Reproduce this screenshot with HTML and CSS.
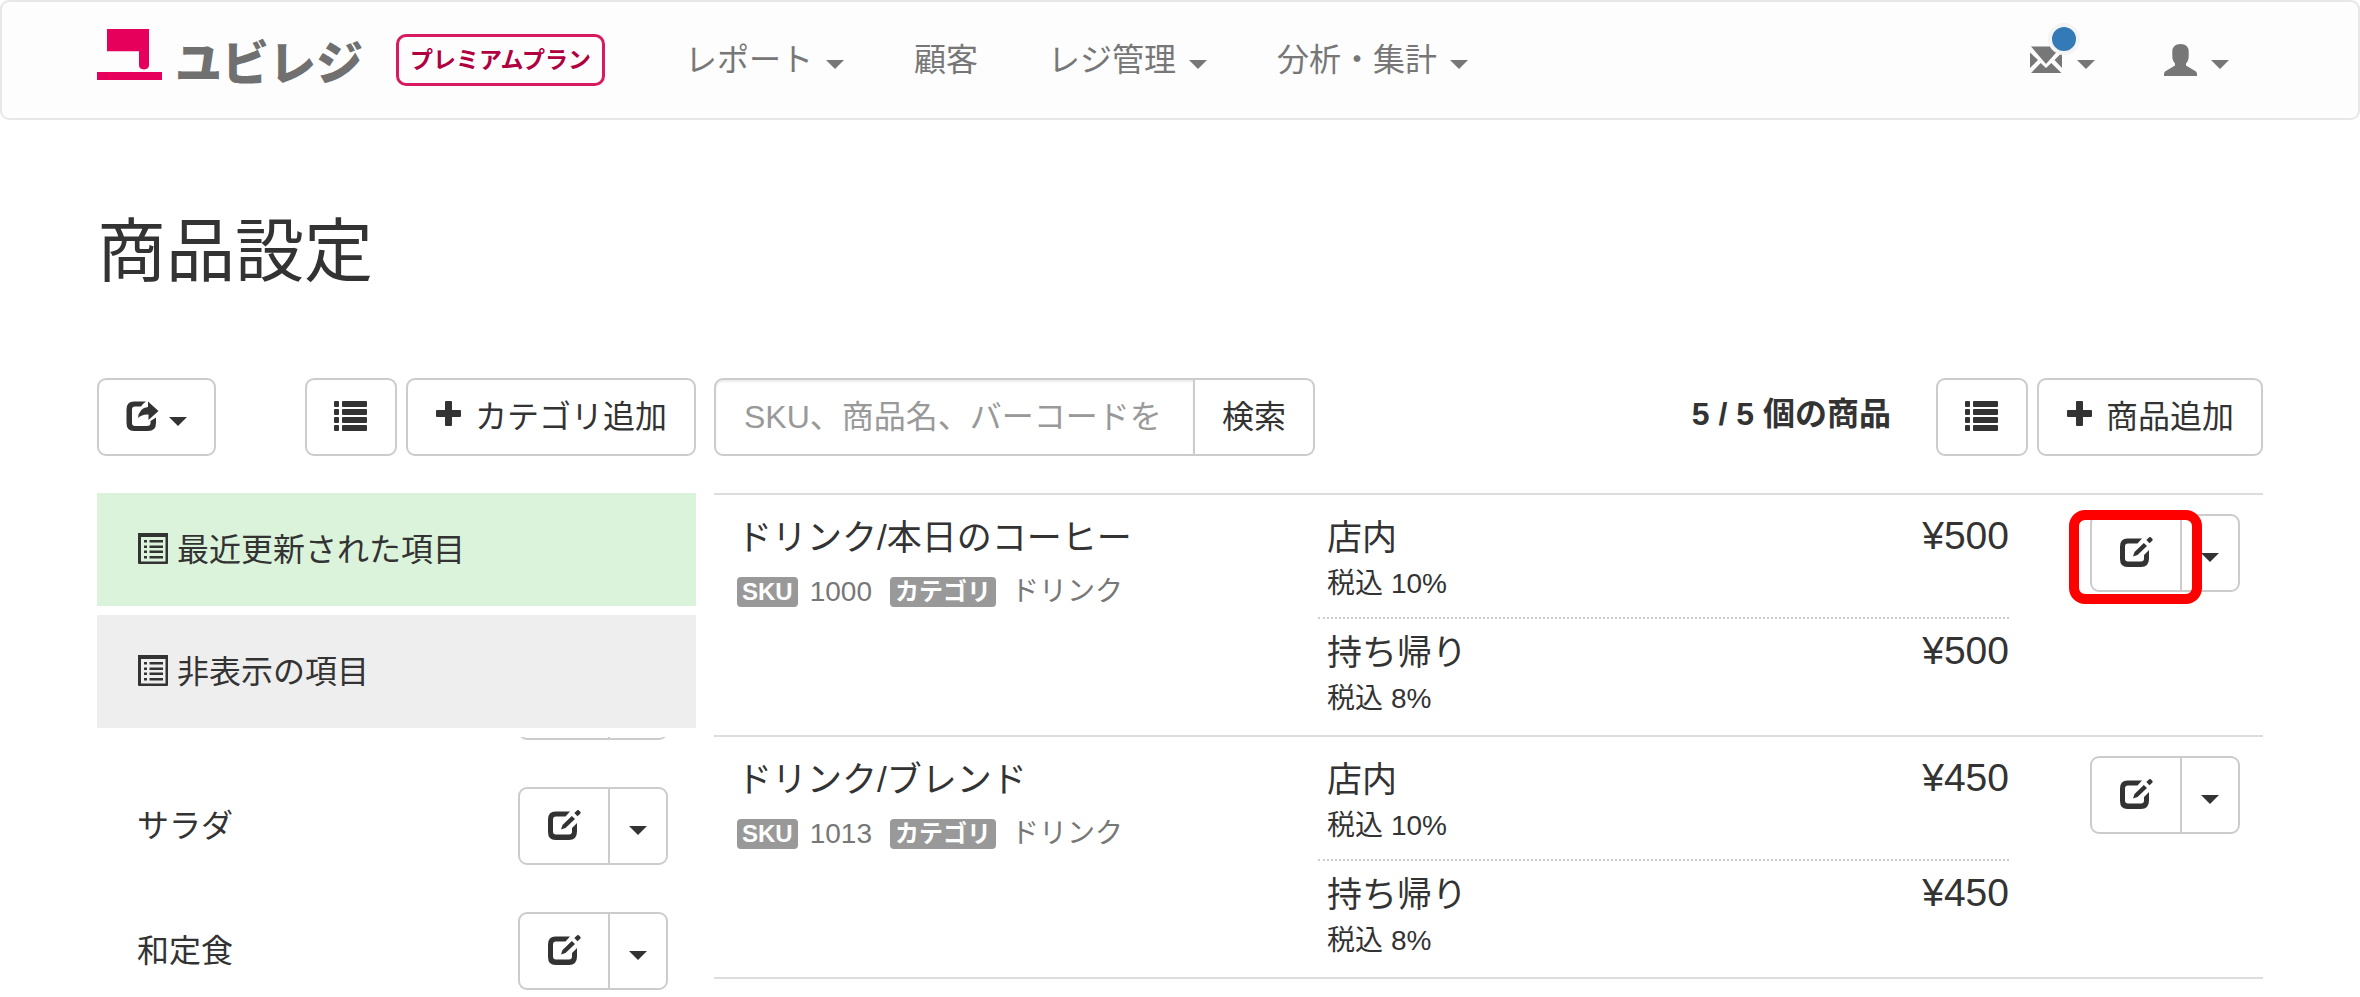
FILE: index.html
```html
<!DOCTYPE html>
<html lang="ja">
<head>
    <meta charset="UTF-8">
    <meta name="viewport" content="width=device-width, initial-scale=1.0">
    <title>商品設定</title>
    <link rel="stylesheet" href="styles.css">
</head>
<body>
<!-- アイコン定義 -->
<svg class="sprite" aria-hidden="true">
    <symbol id="i-share" viewBox="0 0 34 34">
        <path d="M8 1.500H20Q17 3.500 15 6.500H9Q6 6.500 6 9.500V23Q6 26 9 26H21Q24.500 26 24.500 23V21L30 17.500V23Q30 31 22 31H8Q.5 31 .5 23V9.500Q.5 1.500 8 1.500Z"/>
        <path d="M22 1.500L32.500 11L22.500 20V14.500Q16 14 12 18Q13 8 22 7Z"/>
    </symbol>
    <symbol id="i-list" viewBox="0 0 34 34">
        <rect x="0" y="1" width="5" height="6" rx="1"/><rect x="8" y="1" width="25" height="6" rx="1"/>
        <rect x="0" y="9" width="5" height="6" rx="1"/><rect x="8" y="9" width="25" height="6" rx="1"/>
        <rect x="0" y="17" width="5" height="6" rx="1"/><rect x="8" y="17" width="25" height="6" rx="1"/>
        <rect x="0" y="25" width="5" height="6" rx="1"/><rect x="8" y="25" width="25" height="6" rx="1"/>
    </symbol>
    <symbol id="i-plus" viewBox="0 0 34 34">
        <path d="M11 1H16Q17 1 17 2V10H25Q26 10 26 11V16Q26 17 25 17H17V25Q17 26 16 26H11Q10 26 10 25V17H2Q1 17 1 16V11Q1 10 2 10H10V2Q10 1 11 1Z"/>
    </symbol>
    <symbol id="i-edit" viewBox="0 0 34 34">
        <path d="M8.500 2.500H23L18.500 7.500H9Q6 7.500 6 10.500V22.500Q6 25.500 9 25.500H22Q25 25.500 25 22.500V19L30 14V22.500Q30 31 22 31H8.500Q1 31 1 23V10.500Q1 2.500 8.500 2.500Z"/>
        <path d="M14 20.500L15.500 16L24.800 7L28 10L18.500 19Z"/>
        <path d="M27.300 4L30.200 1.200Q31 .8 31.800 1.300L33.500 3Q34 4 33.200 4.800L30.500 7.300Z"/>
    </symbol>
    <symbol id="i-list-alt" viewBox="0 1 34 34">
        <path fill-rule="evenodd" d="M2 0H30Q31 0 31 1V31Q31 32 30 32H2Q1 32 1 31V1Q1 0 2 0ZM4 5V29.500H28.500V5Z"/>
        <path d="M7 8h3v2.500h-3zM12.500 8H26v2.500H12.500zM7 13.500h3V16h-3zM12.500 13.500H26V16H12.500zM7 18.500h3V21h-3zM12.500 18.500H26V21H12.500zM7 24h3v2.500h-3zM12.500 24H26v2.500H12.500z"/>
    </symbol>
    <symbol id="i-mail" viewBox="0 0 34 34">
        <path d="M1 3.500H31.500L16 21ZM0 9.500L8 17L0 25ZM32 9.500L24.500 17L32 25ZM1 30L10.700 20L16 25L21.300 20L31.500 30Z"/>
    </symbol>
    <symbol id="i-user" viewBox="0 0 34 34">
        <path d="M16.500 1Q24.700 1 24.700 9V13Q24.700 18 22 20.500V22.500L32 28.500Q33 29.500 33 31V33H0V31Q0 29.500 1 28.500L11 22.500V20.500Q8.300 18 8.300 13V9Q8.300 1 16.500 1Z"/>
    </symbol>
</svg>

<header class="navbar">
    <a href="#" class="brand">
        <svg class="brand-mark" viewBox="0 0 65 51" aria-hidden="true">
            <path d="M10 0H52V42Q52 47 47 47Q42 47 42 42V26H10Z" transform="scale(1 .86)"/>
            <path d="M0 43H65V51H0Z"/>
        </svg>
        <span class="brand-name">ユビレジ</span>
    </a>
    <span class="plan">プレミアムプラン</span>
    <nav class="menu">
        <a href="#">レポート<span class="caret"></span></a>
        <a href="#">顧客</a>
        <a href="#">レジ管理<span class="caret"></span></a>
        <a href="#">分析・集計<span class="caret"></span></a>
    </nav>
    <nav class="menu menu-right">
        <a href="#" aria-label="お知らせ">
            <span class="mail"><svg class="icon"><use href="#i-mail"/></svg><span class="dot"></span></span>
            <span class="caret"></span>
        </a>
        <a href="#" aria-label="アカウント"><svg class="icon"><use href="#i-user"/></svg><span class="caret"></span></a>
    </nav>
</header>

<main class="container">
    <h1 class="title">商品設定</h1>
    <div class="columns">
        <aside class="side">
            <div class="toolbar">
                <button type="button" class="btn btn-export" aria-label="エクスポート"><svg class="icon"><use href="#i-share"/></svg><span class="caret"></span></button>
                <button type="button" class="btn" aria-label="カテゴリ並び替え"><svg class="icon"><use href="#i-list"/></svg></button>
                <button type="button" class="btn"><svg class="icon"><use href="#i-plus"/></svg>カテゴリ追加</button>
            </div>
            <a href="#" class="filter active"><svg class="icon"><use href="#i-list-alt"/></svg>最近更新された項目</a>
            <a href="#" class="filter"><svg class="icon"><use href="#i-list-alt"/></svg>非表示の項目</a>
            <ul class="categories">
                <li>
                    <span></span>
                    <div class="btn-group">
                        <button type="button" class="btn" aria-label="編集"><svg class="icon"><use href="#i-edit"/></svg></button>
                        <button type="button" class="btn btn-caret" aria-label="メニュー"><span class="caret"></span></button>
                    </div>
                </li>
                <li>
                    <span>サラダ</span>
                    <div class="btn-group">
                        <button type="button" class="btn" aria-label="編集"><svg class="icon"><use href="#i-edit"/></svg></button>
                        <button type="button" class="btn btn-caret" aria-label="メニュー"><span class="caret"></span></button>
                    </div>
                </li>
                <li>
                    <span>和定食</span>
                    <div class="btn-group">
                        <button type="button" class="btn" aria-label="編集"><svg class="icon"><use href="#i-edit"/></svg></button>
                        <button type="button" class="btn btn-caret" aria-label="メニュー"><span class="caret"></span></button>
                    </div>
                </li>
            </ul>
        </aside>

        <section class="items">
            <div class="toolbar">
                <form class="search">
                    <input type="text" class="search-input" aria-label="商品検索" placeholder="SKU、商品名、バーコードを">
                    <button type="submit" class="btn">検索</button>
                </form>
                <strong class="count">5 / 5 個の商品</strong>
                <button type="button" class="btn" aria-label="商品並び替え"><svg class="icon"><use href="#i-list"/></svg></button>
                <button type="button" class="btn"><svg class="icon"><use href="#i-plus"/></svg>商品追加</button>
            </div>

            <ul class="products">
                <li class="product">
                    <div class="info">
                        <div class="name">ドリンク/本日のコーヒー</div>
                        <div class="meta">
                            <span class="tag">SKU</span><span class="sku">1000</span>
                            <span class="tag">カテゴリ</span><span class="cat">ドリンク</span>
                        </div>
                    </div>
                    <div class="prices">
                        <div class="price">
                            <div><div class="place">店内</div><div class="tax">税込 10%</div></div>
                            <div class="yen">¥500</div>
                        </div>
                        <div class="price">
                            <div><div class="place">持ち帰り</div><div class="tax">税込 8%</div></div>
                            <div class="yen">¥500</div>
                        </div>
                    </div>
                    <div class="btn-group">
                        <button type="button" class="btn" aria-label="編集"><svg class="icon"><use href="#i-edit"/></svg></button>
                        <button type="button" class="btn btn-caret" aria-label="メニュー"><span class="caret"></span></button>
                        <span class="marker"></span>
                    </div>
                </li>
                <li class="product">
                    <div class="info">
                        <div class="name">ドリンク/ブレンド</div>
                        <div class="meta">
                            <span class="tag">SKU</span><span class="sku">1013</span>
                            <span class="tag">カテゴリ</span><span class="cat">ドリンク</span>
                        </div>
                    </div>
                    <div class="prices">
                        <div class="price">
                            <div><div class="place">店内</div><div class="tax">税込 10%</div></div>
                            <div class="yen">¥450</div>
                        </div>
                        <div class="price">
                            <div><div class="place">持ち帰り</div><div class="tax">税込 8%</div></div>
                            <div class="yen">¥450</div>
                        </div>
                    </div>
                    <div class="btn-group">
                        <button type="button" class="btn" aria-label="編集"><svg class="icon"><use href="#i-edit"/></svg></button>
                        <button type="button" class="btn btn-caret" aria-label="メニュー"><span class="caret"></span></button>
                    </div>
                </li>
            </ul>
        </section>
    </div>
</main>
</body>
</html>
```

FILE: styles.css
```css
* {
    box-sizing: border-box;
}

body {
    margin: 0;
    height: 100vh;
    display: flex;
    flex-direction: column;
    color: #333;
    background-color: #fff;
    font-family: "Liberation Sans", "Noto Sans CJK JP", sans-serif;
    font-size: 32px;
    line-height: 44px;
}

ul {
    list-style: none;
    margin: 0;
    padding: 0;
}

a {
    color: inherit;
    text-decoration: none;
}

.sprite {
    display: none;
}

.icon {
    width: 34px;
    height: 34px;
    flex: none;
    fill: currentColor;
}

.caret {
    flex: none;
    margin-top: 8px;
    border-top: 9px solid;
    border-left: 9px solid transparent;
    border-right: 9px solid transparent;
}

/* ヘッダー */
.navbar {
    display: flex;
    align-items: center;
    flex: none;
    height: 120px;
    padding: 0 129px 0 95px;
    border: 2px solid #e7e7e7;
    border-radius: 9px;
    background-color: #fdfdfd;
    color: #777;
}

.brand {
    display: flex;
    align-items: flex-start;
    gap: 13px;
}

.brand-mark {
    width: 65px;
    height: 51px;
    fill: #e6005c;
}

.brand-name {
    padding-top: 8px;
    color: #707070;
    font-size: 47px;
    font-weight: 900;
    line-height: 54px;
}

.plan {
    margin-left: 33px;
    padding: 1px 11px;
    border: 3px solid #d81b60;
    border-radius: 10px;
    color: #b0003f;
    font-size: 23px;
    font-weight: bold;
}

.menu {
    display: flex;
    gap: 70px;
    margin-left: 80px;
}

.menu a {
    display: flex;
    align-items: center;
    gap: 13px;
}

.menu-right {
    gap: 69px;
    margin-left: auto;
}

.mail {
    display: flex;
    position: relative;
}

.dot {
    position: absolute;
    top: -20px;
    right: -16px;
    width: 32px;
    height: 32px;
    border: 4px solid #f4f4f4;
    border-radius: 50%;
    background-color: #337ab7;
}

/* レイアウト */
.container {
    display: flex;
    flex-direction: column;
    flex: 1;
    min-height: 0;
    padding: 0 97px;
}

.title {
    margin: 95px 0 87px;
    font-size: 69px;
    font-weight: normal;
    line-height: 76px;
}

.columns {
    display: grid;
    grid-template-columns: 599px 1fr;
    grid-template-rows: minmax(0, 1fr);
    gap: 18px;
    flex: 1;
    min-height: 0;
}

.side {
    display: flex;
    flex-direction: column;
    min-height: 0;
}

.toolbar {
    display: flex;
    gap: 9px;
    margin-bottom: 37px;
}

/* ボタン */
.btn {
    display: flex;
    align-items: center;
    justify-content: center;
    gap: 6px;
    height: 78px;
    padding: 0 27px;
    border: 2px solid #ccc;
    border-radius: 9px;
    background-color: #fff;
    color: #333;
    font: inherit;
    white-space: nowrap;
}

.btn-export {
    gap: 9px;
    margin-right: auto;
}

.btn-group {
    display: flex;
    position: relative;
}

.btn-group .btn:first-child {
    border-radius: 9px 0 0 9px;
}

.btn-group .btn-caret {
    margin-left: -2px;
    padding: 0 19px;
    border-radius: 0 9px 9px 0;
}

/* サイドバー */
.filter {
    display: flex;
    align-items: center;
    flex: none;
    gap: 6px;
    height: 113px;
    margin-bottom: 9px;
    padding: 0 40px;
    background-color: #eee;
}

.filter.active {
    background-color: #dbf2db;
}

.categories {
    display: flex;
    flex-direction: column;
    justify-content: flex-end;
    gap: 47px;
    flex: 1;
    min-height: 0;
    padding: 0 28px 7px 40px;
    overflow: hidden;
}

.categories li {
    display: flex;
    align-items: center;
    justify-content: space-between;
    flex: none;
}

/* 検索 */
.search {
    display: flex;
    width: 601px;
    margin: 0 auto 0 0;
}

.search-input {
    flex: 1;
    min-width: 0;
    padding: 0 28px;
    border: 2px solid #ccc;
    border-radius: 9px 0 0 9px;
    box-shadow: inset 0 2px 2px rgba(0, 0, 0, 0.075);
    font: inherit;
}

.search-input::placeholder {
    color: #999;
}

.search .btn {
    margin-left: -2px;
    border-radius: 0 9px 9px 0;
}

.count {
    margin-right: 36px;
    line-height: 72px;
}

/* 商品一覧 */
.products {
    border-bottom: 2px solid #ddd;
}

.product {
    display: grid;
    grid-template-columns: 39% 1fr 254px;
    align-items: start;
    padding: 19px 0 14px;
    border-top: 2px solid #ddd;
}

.product .btn-group {
    justify-self: end;
    margin-right: 23px;
}

.info {
    padding-left: 23px;
}

.name,
.place {
    font-size: 35px;
    line-height: 48px;
}

.meta {
    display: flex;
    align-items: center;
    margin-top: 8px;
    color: #777;
    font-size: 28px;
}

.tag {
    padding: 0 5px;
    border-radius: 4px;
    background-color: #999;
    color: #fff;
    font-size: 24px;
    font-weight: bold;
    line-height: 30px;
}

.sku {
    margin: 0 18px 0 12px;
}

.cat {
    margin-left: 15px;
}

.price {
    display: flex;
    justify-content: space-between;
    padding-left: 9px;
}

.price + .price {
    margin-top: 11px;
    padding-top: 10px;
    border-top: 2px dotted #ccc;
}

.tax {
    font-size: 28px;
}

.yen {
    font-size: 39px;
}

/* 編集ボタンの強調枠 */
.marker {
    position: absolute;
    top: -4px;
    left: -21px;
    width: 133px;
    height: 94px;
    border: 10px solid #f00;
    border-radius: 16px;
    pointer-events: none;
}
```
